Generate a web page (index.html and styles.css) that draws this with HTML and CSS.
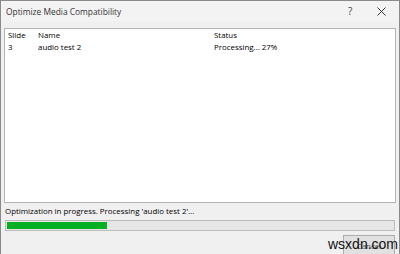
FILE: index.html
```html
<!DOCTYPE html>
<html>
<head>
<meta charset="utf-8">
<link rel="stylesheet" href="styles.css">
</head>
<body>
<div class="window">
  <div class="titlebar">
    <span class="title">Optimize Media Compatibility</span>
    <span class="help">?</span>
    <span class="close">
      <svg width="9" height="9" viewBox="0 0 9 9"><path d="M0.5 0.5 L8.5 8.5 M8.5 0.5 L0.5 8.5" stroke="#333" stroke-width="1" fill="none"/></svg>
    </span>
  </div>
  <div class="body">
    <div class="list">
      <div class="row head">
        <span>Slide</span><span>Name</span><span>Status</span>
      </div>
      <div class="row">
        <span>3</span><span>audio test 2</span><span>Processing... 27%</span>
      </div>
    </div>
    <div class="status">Optimization in progress. Processing 'audio test 2'...</div>
    <div class="progress"><div class="fill" style="width:26%"></div></div>
    <div class="buttons">
      <button class="cancel">Cancel</button>
    </div>
  </div>
  <div class="watermark">wsxdn.com</div>
</div>
</body>
</html>
```
FILE: styles.css
```css
html, body {
  margin: 0;
  padding: 0;
  background: #f0f0f0;
}
.window {
  position: relative;
  width: 400px;
  height: 254px;
  box-sizing: border-box;
  border: 1px solid #8a8a8a;
  border-bottom: none;
  background: #f0f0f0;
  font-family: "Open Sans", "Noto Sans", sans-serif;
  font-size: 7.9px;
  color: #000;
  overflow: hidden;
}
.titlebar {
  height: 20px;
  display: flex;
  align-items: center;
  background: #f3f3f3;
}
.title {
  flex: 1;
  padding-left: 5px;
  font-size: 8.4px;
  color: #333;
}
.help {
  width: 10px;
  font-size: 10px;
  color: #444;
  margin-right: 19px;
}
.close {
  display: flex;
  margin-right: 13px;
}
.body {
  padding: 7px 3px 0 3px;
  display: flex;
  flex-direction: column;
}
.list {
  height: 175px;
  box-sizing: border-box;
  border: 1px solid #b5b5b5;
  background: #fff;
}
.row {
  display: grid;
  grid-template-columns: 30px 176px 1fr;
  padding-left: 3px;
  height: 13px;
  line-height: 13px;
}
.row.head {
  height: 12px;
  line-height: 12px;
}
.status {
  margin-top: 3px;
  height: 13px;
  line-height: 11px;
  padding-left: 1px;
}
.progress {
  margin: 1px 1px 0 1px;
  height: 11px;
  box-sizing: border-box;
  border: 1px solid #bcbcbc;
  background: #e6e6e6;
  padding: 1px;
}
.fill {
  height: 100%;
  background: #06b025;
}
.buttons {
  display: flex;
  justify-content: flex-end;
  padding-top: 4px;
  padding-right: 1px;
}
.cancel {
  width: 52px;
  height: 20px;
  border: 1px solid #adadad;
  background: #e1e1e1;
  font-family: inherit;
  font-size: 8px;
  color: #555;
  padding: 0;
}
.watermark {
  position: absolute;
  left: 327px;
  top: 235px;
  font-family: "Liberation Sans", Arial, sans-serif;
  font-size: 14px;
  color: #111;
}
```
